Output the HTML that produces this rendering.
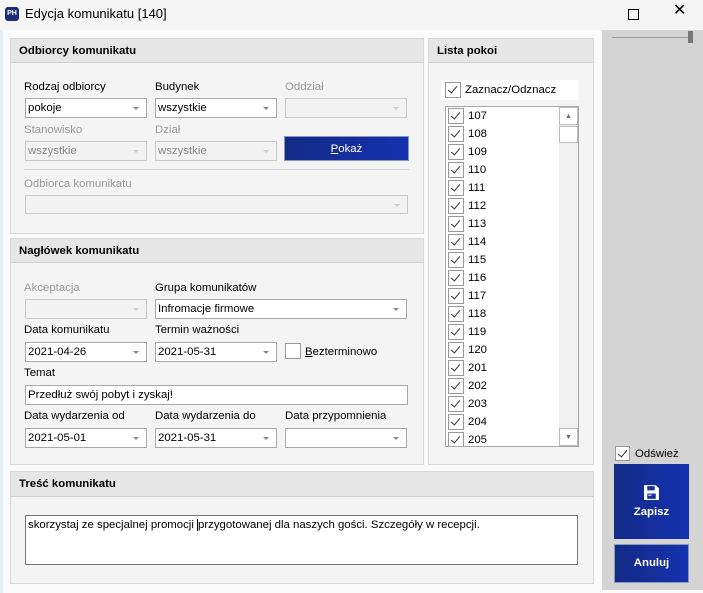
<!DOCTYPE html>
<html><head><meta charset="utf-8"><style>
*{box-sizing:border-box;margin:0;padding:0}
body{width:703px;height:593px;position:relative;background:#fafafa;font-family:"Segoe UI","Liberation Sans",sans-serif;font-size:11.4px;line-height:16px;color:#000;overflow:hidden}
.a{position:absolute}
.panel{position:absolute;background:#f4f4f4;border:1px solid #d8d8d8}
.ph{position:absolute;left:0;right:0;top:0;height:24px;background:#e6e6e6;border-bottom:1px solid #d0d0d0;font-weight:bold;font-size:11.4px;padding:4px 0 0 8px}
.lbl{position:absolute;font-size:11.4px}
.dis{color:#999}
.inp{position:absolute;height:20px;background:#fff;border:1px solid #a8a8a8;font-size:11.4px;padding:1px 0 0 2px}
.inp.d{background:#f2f2f2;border-color:#c8c8c8;color:#888}
.inp.c::after{content:"";position:absolute;right:7px;top:8px;border-left:3px solid transparent;border-right:3px solid transparent;border-top:3px solid #888}
.inp.d.c::after{border-top-color:#ccc}
.cb{position:absolute;width:15px;height:15px;border:1px solid #999;background:#fff}
.cb.k::after{content:"";position:absolute;left:4px;top:1px;width:4px;height:8px;border-right:1px solid #333;border-bottom:1px solid #333;transform:rotate(40deg)}
.row{position:absolute;left:1px;height:18px;font-size:11.4px}
.row .cb{left:1px;top:1px;width:16px;height:16px}
.row span{position:absolute;left:21px;top:1px}
</style></head><body>
<div class="a" style="left:0;top:0;width:703px;height:30px;background:#f5f5f5"></div>
<div class="a" style="left:5px;top:7px;width:14px;height:14px;background:#1e2f7a;border-radius:3px;color:#fff;font-size:7px;font-weight:bold;text-align:center;line-height:14px">PH</div>
<div class="a" style="left:25px;top:6px;font-size:13px">Edycja komunikatu [140]</div>
<div class="a" style="left:628px;top:9px;width:11px;height:11px;border:1px solid #000"></div>
<div class="a" style="left:673px;top:3px;font-size:16px">✕</div>
<div class="a" style="left:0;top:30px;width:3px;height:563px;background:#e3f0fb"></div>

<div class="a" style="left:602px;top:30px;width:101px;height:560px;background:#d4d4d4"></div>
<div class="a" style="left:612px;top:37px;width:78px;height:1px;background:#999"></div>
<div class="a" style="left:688px;top:31px;width:5px;height:12px;background:#777"></div>
<div class="cb k" style="left:615px;top:446px"></div>
<div class="a" style="left:635px;top:446px">Odśwież</div>
<div class="a" style="left:614px;top:464px;width:75px;height:75px;background:linear-gradient(90deg,#132a86,#1432b0);color:#fff;font-weight:bold;text-align:center">
<svg style="position:absolute;left:29px;top:20px" width="17" height="17" viewBox="0 0 16 16"><path d="M1 1h11l3 3v11H1z" fill="#fff"/><rect x="4" y="2" width="7" height="4" fill="#1432a0"/><rect x="4" y="9" width="8" height="5" fill="#1432a0"/><rect x="5" y="10" width="3" height="1" fill="#fff"/></svg>
<div style="position:absolute;left:0;right:0;top:40px">Zapisz</div></div>
<div class="a" style="left:614px;top:544px;width:75px;height:39px;background:linear-gradient(90deg,#132a86,#1432b0);border:1px solid #8899bb;color:#fff;font-weight:bold;text-align:center;padding-top:10px">Anuluj</div>

<div class="panel" style="left:10px;top:38px;width:414px;height:196px"><div class="ph">Odbiorcy komunikatu</div></div>
<div class="lbl" style="left:24px;top:79px">Rodzaj odbiorcy</div>
<div class="lbl" style="left:155px;top:79px">Budynek</div>
<div class="lbl dis" style="left:285px;top:79px">Oddział</div>
<div class="inp c" style="left:25px;top:98px;width:122px">pokoje</div>
<div class="inp c" style="left:155px;top:98px;width:122px">wszystkie</div>
<div class="inp d c" style="left:285px;top:98px;width:122px"></div>
<div class="lbl dis" style="left:24px;top:122px">Stanowisko</div>
<div class="lbl dis" style="left:155px;top:122px">Dział</div>
<div class="inp d c" style="left:25px;top:141px;width:122px">wszystkie</div>
<div class="inp d c" style="left:155px;top:141px;width:122px">wszystkie</div>
<div class="a" style="left:284px;top:136px;width:125px;height:25px;background:linear-gradient(90deg,#132a86,#1432b0);border:1px solid #8899bb;color:#fff;text-align:center;padding-top:4px"><u>P</u>okaż</div>
<div class="a" style="left:24px;top:169px;width:385px;height:1px;background:#d0d0d0"></div>
<div class="lbl dis" style="left:24px;top:176px">Odbiorca komunikatu</div>
<div class="inp d c" style="left:25px;top:195px;width:383px;height:19px"></div>

<div class="panel" style="left:10px;top:238px;width:414px;height:227px"><div class="ph">Nagłówek komunikatu</div></div>
<div class="lbl dis" style="left:24px;top:280px">Akceptacja</div>
<div class="lbl" style="left:155px;top:280px">Grupa komunikatów</div>
<div class="inp d c" style="left:25px;top:299px;width:122px"></div>
<div class="inp c" style="left:155px;top:299px;width:252px">Infromacje firmowe</div>
<div class="lbl" style="left:24px;top:322px">Data komunikatu</div>
<div class="lbl" style="left:155px;top:322px">Termin ważności</div>
<div class="inp c" style="left:25px;top:342px;width:122px">2021-04-26</div>
<div class="inp c" style="left:155px;top:342px;width:122px">2021-05-31</div>
<div class="cb" style="left:285px;top:343px;width:16px;height:16px"></div>
<div class="lbl" style="left:305px;top:344px"><u>B</u>ezterminowo</div>
<div class="lbl" style="left:24px;top:365px">Temat</div>
<div class="inp" style="left:25px;top:385px;width:383px">Przedłuż swój pobyt i zyskaj!</div>
<div class="lbl" style="left:24px;top:408px">Data wydarzenia od</div>
<div class="lbl" style="left:155px;top:408px">Data wydarzenia do</div>
<div class="lbl" style="left:285px;top:408px">Data przypomnienia</div>
<div class="inp c" style="left:25px;top:428px;width:122px">2021-05-01</div>
<div class="inp c" style="left:155px;top:428px;width:122px">2021-05-31</div>
<div class="inp c" style="left:285px;top:428px;width:122px"></div>

<div class="panel" style="left:428px;top:38px;width:166px;height:427px"><div class="ph">Lista pokoi</div></div>
<div class="a" style="left:441px;top:80px;width:137px;height:20px;background:#fff"></div>
<div class="cb k" style="left:445px;top:82px;width:16px;height:16px"></div>
<div class="a" style="left:465px;top:82px">Zaznacz/Odznacz</div>
<div class="a" style="left:445px;top:106px;width:134px;height:341px;background:#fff;border:1px solid #a8a8a8;overflow:hidden">
<div class="a" style="left:113px;top:0;width:19px;height:339px;background:#f0f0f0"></div>
<div class="a" style="left:113px;top:0;width:19px;height:18px;background:#fff;border:1px solid #bbb;font-size:7px;line-height:10px;color:#666;text-align:center;padding-top:4px">▲</div>
<div class="a" style="left:113px;top:19px;width:19px;height:17px;background:#fff;border:1px solid #bbb"></div>
<div class="a" style="left:113px;top:321px;width:19px;height:18px;background:#fff;border:1px solid #bbb;font-size:7px;line-height:10px;color:#666;text-align:center;padding-top:4px">▼</div>
<div class="row" style="top:0"><div class="cb k"></div><span>107</span></div>
<div class="row" style="top:18px"><div class="cb k"></div><span>108</span></div>
<div class="row" style="top:36px"><div class="cb k"></div><span>109</span></div>
<div class="row" style="top:54px"><div class="cb k"></div><span>110</span></div>
<div class="row" style="top:72px"><div class="cb k"></div><span>111</span></div>
<div class="row" style="top:90px"><div class="cb k"></div><span>112</span></div>
<div class="row" style="top:108px"><div class="cb k"></div><span>113</span></div>
<div class="row" style="top:126px"><div class="cb k"></div><span>114</span></div>
<div class="row" style="top:144px"><div class="cb k"></div><span>115</span></div>
<div class="row" style="top:162px"><div class="cb k"></div><span>116</span></div>
<div class="row" style="top:180px"><div class="cb k"></div><span>117</span></div>
<div class="row" style="top:198px"><div class="cb k"></div><span>118</span></div>
<div class="row" style="top:216px"><div class="cb k"></div><span>119</span></div>
<div class="row" style="top:234px"><div class="cb k"></div><span>120</span></div>
<div class="row" style="top:252px"><div class="cb k"></div><span>201</span></div>
<div class="row" style="top:270px"><div class="cb k"></div><span>202</span></div>
<div class="row" style="top:288px"><div class="cb k"></div><span>203</span></div>
<div class="row" style="top:306px"><div class="cb k"></div><span>204</span></div>
<div class="row" style="top:324px"><div class="cb k"></div><span>205</span></div>
</div>

<div class="panel" style="left:10px;top:471px;width:584px;height:113px"><div class="ph" style="height:25px">Treść komunikatu</div></div>
<div class="a" style="left:25px;top:515px;width:553px;height:50px;background:#fff;border:1px solid #777;padding:1px 0 0 2px">skorzystaj ze specjalnej promocji <span style="border-left:1px solid #000"></span>przygotowanej dla naszych gości. Szczegóły w recepcji.</div>
</body></html>
